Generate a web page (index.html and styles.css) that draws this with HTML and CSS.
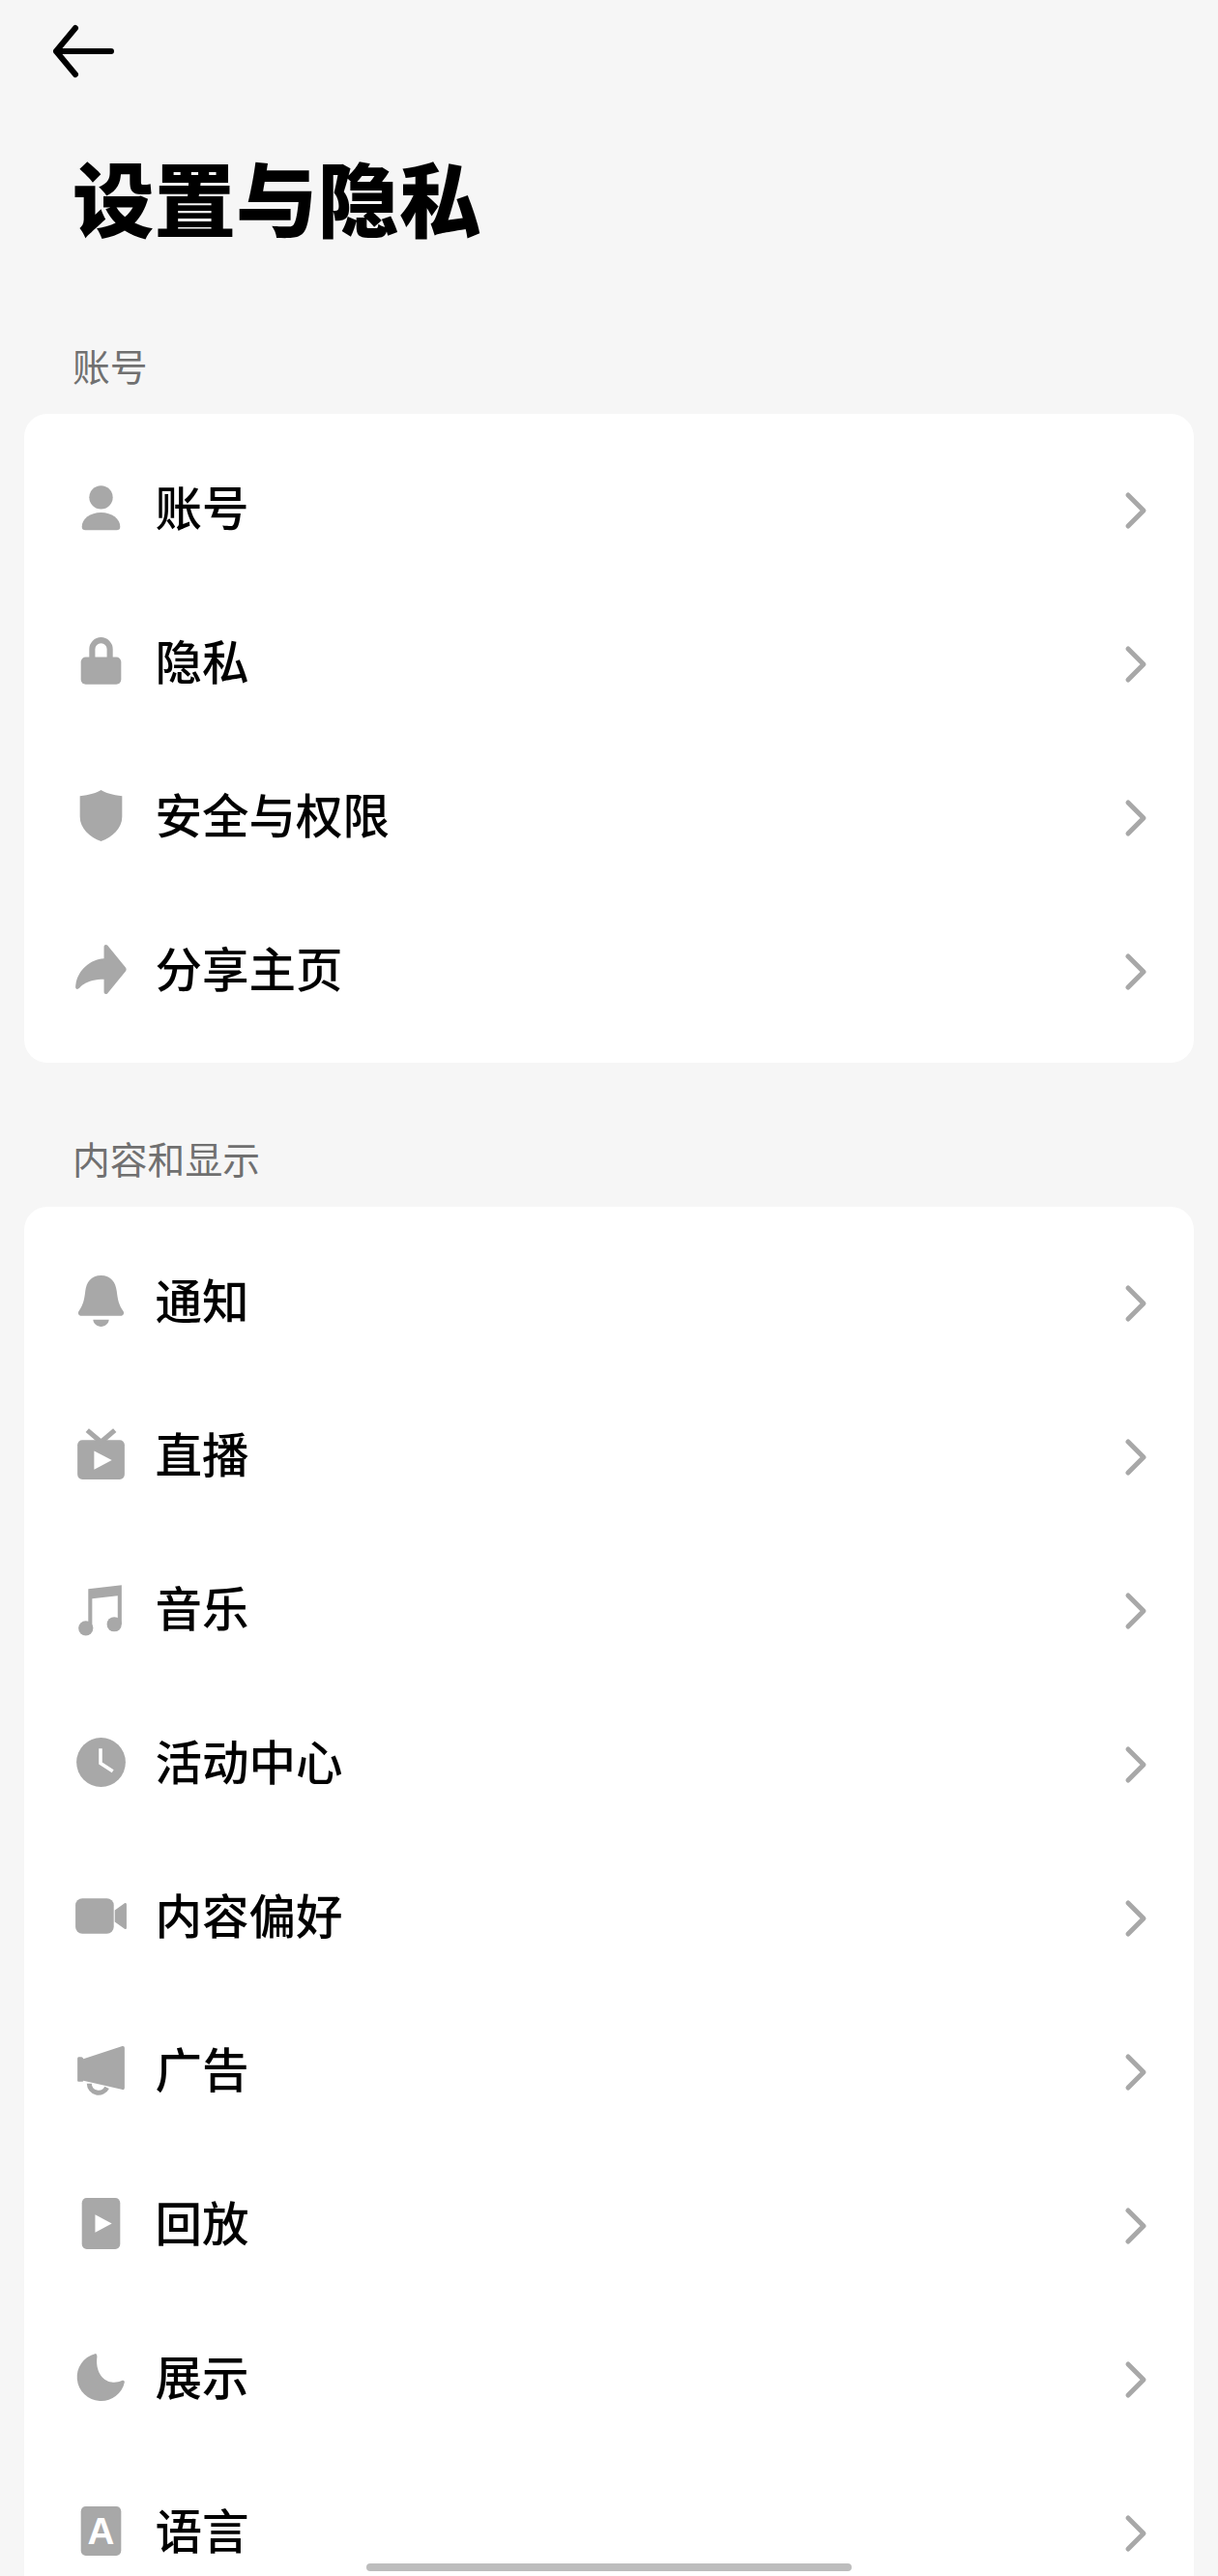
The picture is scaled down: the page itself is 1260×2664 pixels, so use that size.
FILE: index.html
```html
<!DOCTYPE html>
<html lang="zh-CN">
<head>
    <meta charset="UTF-8">
    <meta name="viewport" content="width=device-width, initial-scale=1.0">
    <title>设置与隐私</title>
    <link rel="stylesheet" href="styles.css">
</head>
<body>
    <svg width="0" height="0" class="defs">
        <symbol id="chevron" viewBox="0 0 24 40">
            <path d="M4 4 L20 20 L4 36" fill="none" stroke="#a8a8a8" stroke-width="5" stroke-linecap="round" stroke-linejoin="round"/>
        </symbol>
    </svg>

    <div class="topbar">
        <svg class="back" viewBox="0 0 68 56">
            <path d="M26 4 L6 28 L26 52 M6 28 H63" fill="none" stroke="#000" stroke-width="6" stroke-linecap="round" stroke-linejoin="round"/>
        </svg>
    </div>
    <h1 class="page-title">设置与隐私</h1>

    <p class="section-label">账号</p>
    <div class="card">
        <div class="row">
            <svg class="icon" viewBox="0 0 64 64"><circle cx="32" cy="21" r="12"/><path d="M12.5 51 C12.5 43 21 36.500 32 36.500 S51.5 43 51.5 51 C51.5 53.500 50 54.500 48 54.500 H16 C14 54.500 12.500 53.500 12.500 51z"/></svg>
            <span class="row-text">账号</span>
            <svg class="chevron"><use href="#chevron"/></svg>
        </div>
        <div class="row">
            <svg class="icon" viewBox="0 0 64 64"><rect x="11.500" y="27" width="41" height="28" rx="5"/><path d="M23 29 V19 A9 9 0 0 1 41 19 V29" fill="none" stroke="#a8a8a8" stroke-width="6"/></svg>
            <span class="row-text">隐私</span>
            <svg class="chevron"><use href="#chevron"/></svg>
        </div>
        <div class="row">
            <svg class="icon" viewBox="0 0 64 64"><path d="M32 6 C36 9 44 11 53.500 12 V33 C53.500 45 43.500 54 32 58 C20.500 54 10.500 45 10.500 33 V12 C20 11 28 9 32 6z"/></svg>
            <span class="row-text">安全与权限</span>
            <svg class="chevron"><use href="#chevron"/></svg>
        </div>
        <div class="row">
            <svg class="icon" viewBox="0 0 64 64"><path d="M35 9 C35 7 37 6 38.500 7.500 L57 30 C58 31 58 33 57 34 L38.500 56.500 C37 58 35 57 35 55 V42 C24 42 15 45 10 51 C8 53 6 52 6 50 C7 34 20 22 35 21z"/></svg>
            <span class="row-text">分享主页</span>
            <svg class="chevron"><use href="#chevron"/></svg>
        </div>
    </div>

    <p class="section-label section-label--second">内容和显示</p>
    <div class="card">
        <div class="row">
            <svg class="icon" viewBox="0 0 64 64"><path d="M32 6 C42 6 47 13 48 22 C49 30 50 36 54.500 42 C56 44 55 47 52 47 H12 C9 47 8 44 9.500 42 C14 36 15 30 16 22 C17 13 22 6 32 6z"/><path d="M24 51 H40 C40 55 36 58 32 58 S24 55 24 51z"/></svg>
            <span class="row-text">通知</span>
            <svg class="chevron"><use href="#chevron"/></svg>
        </div>
        <div class="row">
            <svg class="icon" viewBox="0 0 64 64"><rect x="8" y="17" width="48" height="40" rx="5"/><path d="M18 7 L32 19 L46 7" fill="none" stroke="#a8a8a8" stroke-width="5"/><path class="cut" d="M25 28 L43 37.500 L25 47z"/></svg>
            <span class="row-text">直播</span>
            <svg class="chevron"><use href="#chevron"/></svg>
        </div>
        <div class="row">
            <svg class="icon" viewBox="0 0 64 64"><path d="M19 12 L53 8 V48 H49 V19 L23 22 V52 H19z"/><circle cx="16.500" cy="52" r="7.500"/><circle cx="45.500" cy="48" r="7.500"/></svg>
            <span class="row-text">音乐</span>
            <svg class="chevron"><use href="#chevron"/></svg>
        </div>
        <div class="row">
            <svg class="icon" viewBox="0 0 64 64"><circle cx="32" cy="32" r="25"/><path d="M31.500 18 V33 L44 41" fill="none" stroke="#fff" stroke-width="3.500"/></svg>
            <span class="row-text">活动中心</span>
            <svg class="chevron"><use href="#chevron"/></svg>
        </div>
        <div class="row">
            <svg class="icon" viewBox="0 0 64 64"><rect x="6" y="14" width="39" height="36" rx="7"/><path d="M46 26 L56 19 C57 18 58 19 58 20 V44 C58 45 57 46 56 45 L46 38z"/></svg>
            <span class="row-text">内容偏好</span>
            <svg class="chevron"><use href="#chevron"/></svg>
        </div>
        <div class="row">
            <svg class="icon" viewBox="0 0 64 64"><path d="M8 21 C8 19 9 19 10 19 H12 C13 19 14 20 14 21 L53 8 C55 7.500 56 8 56 10 V50 C56 52 55 53 53 52 L14 43 C14 44 13 44 12 44 H10 C9 44 8 44 8 43z"/><path d="M20 46 A9.500 9.500 0 0 0 38 50" fill="none" stroke="#a8a8a8" stroke-width="5"/></svg>
            <span class="row-text">广告</span>
            <svg class="chevron"><use href="#chevron"/></svg>
        </div>
        <div class="row">
            <svg class="icon" viewBox="0 0 64 64"><rect x="12.500" y="6" width="39" height="52" rx="5"/><path class="cut" d="M26 23 L43 32 L26 41z"/></svg>
            <span class="row-text">回放</span>
            <svg class="chevron"><use href="#chevron"/></svg>
        </div>
        <div class="row">
            <svg class="icon" viewBox="0 0 64 64"><path d="M26 8 A24.500 24.500 0 1 0 56 37 C56 35 54 35 53 35.500 C50 37 46 37.500 43 37 C33 35.500 26 25 28 11 C28 9 27 7.500 26 8z"/></svg>
            <span class="row-text">展示</span>
            <svg class="chevron"><use href="#chevron"/></svg>
        </div>
        <div class="row">
            <svg class="icon" viewBox="0 0 64 64"><rect x="11.500" y="7" width="41" height="50" rx="5"/><text class="icon-letter" x="32" y="45" text-anchor="middle">A</text></svg>
            <span class="row-text">语言</span>
            <svg class="chevron"><use href="#chevron"/></svg>
        </div>
    </div>

    <div class="home-bar"></div>
</body>
</html>
```

FILE: styles.css
```css
body {
    width: 1260px;
    height: 2664px;
    margin: 0;
    overflow: hidden;
    position: relative;
    background: #f6f6f6;
    color: #000;
    font-family: "Noto Sans CJK SC", "Noto Sans", sans-serif;
}
.defs {
    position: absolute;
}

.topbar {
    height: 106px;
    padding-left: 52px;
    display: flex;
    align-items: center;
}
.back {
    width: 68px;
    height: 56px;
}
.page-title {
    margin: 46px 0 0 75px;
    font-size: 84.500px;
    font-weight: 900;
    line-height: 100px;
}

.section-label {
    margin: 103px 0 29px 75px;
    font-size: 38.800px;
    line-height: 44px;
    color: #707070;
}
.section-label--second {
    margin-top: 76px;
}

.card {
    margin: 0 25px;
    padding: 17.500px 0;
    background: #fff;
    border-radius: 24px;
}
.row {
    height: 159px;
    padding: 0 48px 0 46.500px;
    display: flex;
    align-items: center;
}
.icon {
    width: 65px;
    height: 65px;
    margin-top: 1px;
    flex: none;
    fill: #a8a8a8;
}
.icon .cut {
    fill: #fff;
}
.icon-letter {
    font-family: "Liberation Sans", sans-serif;
    font-size: 38px;
    font-weight: 700;
    fill: #fff;
}
.row-text {
    margin-left: 24px;
    margin-top: -4px;
    font-size: 48.500px;
    font-weight: 500;
    line-height: 64px;
}
.chevron {
    width: 24px;
    height: 40px;
    margin-left: auto;
    margin-top: 6px;
}

.home-bar {
    position: absolute;
    left: 379px;
    bottom: 5px;
    width: 502px;
    height: 8px;
    border-radius: 4px;
    background: #bdbdbd;
}
```
